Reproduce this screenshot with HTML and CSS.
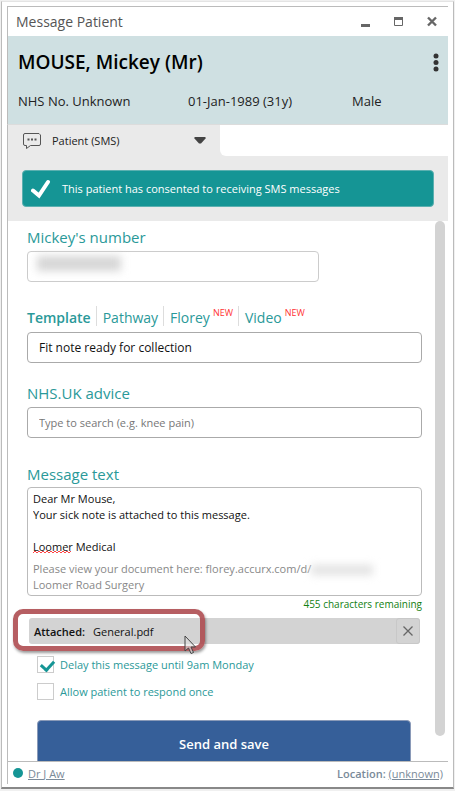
FILE: index.html
```html
<!DOCTYPE html>
<html lang="en">
<head>
  <meta charset="UTF-8">
  <meta name="viewport" content="width=device-width, initial-scale=1.0">
  <title>Message Patient</title>
  <link rel="stylesheet" href="styles.css">
</head>
<body>
  <div class="window">
    <div class="titlebar">
      <span class="titlebar-text">Message Patient</span>
      <button type="button" aria-label="Minimise">
        <svg width="10" height="12"><path d="M0 8h9v3H0z" fill="#666"/></svg>
      </button>
      <button type="button" aria-label="Maximise">
        <svg width="10" height="12"><path d="M.5 1.500h8v8h-8z" fill="none" stroke="#666"/><path d="M0 1h9v3H0z" fill="#666"/></svg>
      </button>
      <button type="button" aria-label="Close">
        <svg width="10" height="12"><path d="M1 1.500l8 8M9 1.500l-8 8" stroke="#666" stroke-width="2.4"/></svg>
      </button>
    </div>

    <header class="patient">
      <div class="patient-top">
        <h1>MOUSE, Mickey (Mr)</h1>
        <button type="button" class="more" aria-label="More options">
          <svg width="6" height="20"><g fill="#333"><circle cx="3" cy="4" r="2.500"/><circle cx="3" cy="10.500" r="2.500"/><circle cx="3" cy="17" r="2.500"/></g></svg>
        </button>
      </div>
      <div class="patient-meta">
        <span>NHS No. Unknown</span>
        <span>01-Jan-1989 (31y)</span>
        <span>Male</span>
      </div>
    </header>

    <div class="tabbar">
      <button type="button" class="tab">
        <svg width="19" height="18" fill="none" stroke="#555"><path d="M2 1.5h14q1.500 1.500 1.500 1.500v9q0 1.500-1.500 1.500H7.500L3.500 16.500V13.500H2q-1.500 0-1.500-1.500V3q0-1.500 1.500-1.500z"/><path d="M4.500 7.500h2M8 7.500h2M11.500 7.500h2" stroke-width="2"/></svg>
        <span>Patient (SMS)</span>
        <svg class="caret" width="12" height="7"><path d="M1 0h10l1 1-5 5.500H5L0 1z" fill="#444"/></svg>
      </button>
      <div class="tab-rest"></div>
    </div>

    <div class="notice">
      <div class="banner">
        <svg width="20" height="20" viewBox="0 0 20 20"><path d="M2 11.500l6 5L17 3" fill="none" stroke="#fff" stroke-width="4" stroke-linecap="round"/></svg>
        <span>This patient has consented to receiving SMS messages</span>
      </div>
    </div>

    <div class="content">
      <form class="form">
        <label class="heading" for="number">Mickey's number</label>
        <div class="field number-field">
          <input type="text" id="number">
          <span class="redacted"></span>
        </div>

        <nav class="sources">
          <a href="#template" class="active">Template</a>
          <a href="#pathway">Pathway</a>
          <a href="#florey">Florey<sup>NEW</sup></a>
          <a href="#video">Video<sup>NEW</sup></a>
        </nav>
        <div class="field">
          <input type="text" id="template" aria-label="Template" value="Fit note ready for collection">
        </div>

        <label class="heading advice-label" for="advice">NHS.UK advice</label>
        <div class="field">
          <input type="text" id="advice" class="search" placeholder="Type to search (e.g. knee pain)">
        </div>

        <label class="heading message-label" for="message">Message text</label>
        <div class="message">
          <textarea id="message" rows="4" spellcheck="false">Dear Mr Mouse,
Your sick note is attached to this message.

Loomer Medical</textarea>
          <svg class="squiggle" width="40" height="4"><path d="M0 3l2-2 2 2 2-2 2 2 2-2 2 2 2-2 2 2 2-2 2 2 2-2 2 2 2-2 2 2 2-2 2 2 2-2 2 2 2-2" fill="none" stroke="#f44"/></svg>
          <p>Please view your document here: florey.accurx.com/d/<span class="redacted-link"></span><br>Loomer Road Surgery</p>
        </div>
        <p class="remaining">455 characters remaining</p>

        <div class="attachment">
          <strong>Attached:</strong>
          <span>General.pdf</span>
          <button type="button" aria-label="Remove attachment">
            <svg width="10" height="10"><path d="M.5.5l9 9M9.500.5l-9 9" stroke="#666" stroke-width="1.300"/></svg>
          </button>
          <div class="highlight"></div>
          <svg class="cursor" width="13" height="20"><path d="M1 1v15l3.500-3 2.500 5.500 2.500-1-2.500-5.500h4.500z" fill="#ddd" fill-opacity=".6" stroke="#444"/></svg>
        </div>

        <label class="check"><input type="checkbox" checked><span>Delay this message until 9am Monday</span></label>
        <label class="check"><input type="checkbox"><span>Allow patient to respond once</span></label>

        <button type="submit" class="send">Send and save</button>
      </form>
      <div class="scrollbar"></div>
    </div>

    <footer class="status">
      <span class="dot"></span>
      <a href="#user">Dr J Aw</a>
      <span class="location"><strong>Location:</strong> <a href="#location">(unknown)</a></span>
    </footer>
  </div>
</body>
</html>
```
FILE: styles.css
```css
* {
  box-sizing: border-box;
}

body {
  margin: 0;
  height: 100vh;
  padding: 1px 1px 2px;
  background: #f0f0f0;
  font-family: "Open Sans", "Noto Sans", sans-serif;
  font-size: 11px;
  color: #222;
}

h1, p {
  margin: 0;
}

button {
  padding: 0;
  border: none;
  background: none;
  font: inherit;
  color: inherit;
}

svg {
  display: block;
  flex: none;
}

input, textarea {
  font: inherit;
  color: #111;
}

.window {
  display: flex;
  flex-direction: column;
  height: 100%;
  padding: 4px 5px 3px;
  background: #fff;
  border: 1px solid #bbb;
  border-top-color: #e4e4e4;
  border-bottom: 2px solid #888;
}

.titlebar,
.patient,
.tabbar,
.notice,
.content,
.status {
  border-left: 1px solid #bbb;
}

.titlebar {
  display: flex;
  align-items: center;
  gap: 23px;
  height: 30px;
  flex: none;
  padding: 0 11px 0 8px;
  border-top: 1px solid #bbb;
  color: #555;
}

.titlebar-text {
  flex: 1;
  font-size: 14px;
}

.patient {
  flex: none;
  height: 89px;
  padding: 13px 9px 0 10px;
  background: #cfe0e2;
  border-bottom: 1px solid #dcdcdc;
}

.patient-top {
  display: flex;
  align-items: center;
  justify-content: space-between;
}

h1 {
  font-size: 19px;
  line-height: 26px;
  font-weight: 600;
  color: #000;
}

.patient-meta {
  display: grid;
  grid-template-columns: 170fr 164fr 87fr;
  margin-top: 17px;
  font-size: 13px;
  line-height: 18px;
}

.tabbar {
  display: flex;
  flex: none;
  height: 31px;
  background: #eaeaea;
}

.tab {
  display: flex;
  align-items: center;
  width: 212px;
  padding: 0 14px 0 15px;
  gap: 10px;
}

.tab .caret {
  margin-left: auto;
}

.tab-rest {
  flex: 1;
  background: #fff;
  border-bottom-left-radius: 6px;
}

.notice {
  flex: none;
  padding: 14px;
  background: #eaeaea;
}

.banner {
  display: flex;
  align-items: center;
  gap: 11px;
  height: 37px;
  padding-left: 8px;
  border: 1px solid #5bb0b0;
  border-radius: 4px;
  background: #159595;
  color: #fff;
}

.content {
  display: flex;
  flex: 1;
  min-height: 0;
  overflow: hidden;
}

.form {
  flex: 1;
  min-width: 0;
  padding: 6px 13px 0 19px;
}

.scrollbar {
  flex: none;
  width: 10px;
  margin: 0 3px 25px 0;
  border-radius: 5px;
  background: #d3d3d3;
}

.heading {
  display: block;
  font-size: 15px;
  line-height: 20px;
  color: #2a9999;
}

.field {
  position: relative;
}

.field input {
  display: block;
  width: 100%;
  height: 31px;
  padding: 0 11px;
  border: 1px solid #aaa;
  border-radius: 4px;
  background: #fff;
  font-size: 12px;
}

.field .search {
  font-size: 11px;
}

.field input::placeholder {
  color: #777;
}

.number-field {
  width: 74%;
  margin-top: 4px;
}

.number-field input {
  border-color: #ccc;
}

.redacted {
  position: absolute;
  left: 10px;
  top: 5px;
  width: 84px;
  height: 15px;
  background: #d6d6d6;
  filter: blur(4px);
}

.sources {
  display: flex;
  margin: 24px 0 6px;
  font-size: 14px;
  line-height: 24px;
}

.sources a {
  height: 20px;
  padding: 0 5px 0 6px;
  border-left: 1px solid #ddd;
  color: #2a9999;
  text-decoration: none;
}

.sources .active {
  padding-left: 0;
  border-left: none;
  font-weight: 600;
}

.sources sup {
  display: inline-block;
  margin-left: 3px;
  font-size: 9px;
  line-height: 8px;
  vertical-align: 7px;
  color: #f33;
}

.advice-label {
  margin: 20px 0 4px;
}

.message-label {
  margin: 26px 0 3px;
}

.message {
  position: relative;
  padding: 3px 5px 2px;
  border: 1px solid #bbb;
  border-radius: 4px;
  line-height: 16px;
  color: #888;
}

.message textarea {
  display: block;
  width: 100%;
  margin-bottom: 6px;
  padding: 0;
  border: none;
  outline: none;
  resize: none;
  overflow: hidden;
  background: none;
}

.squiggle {
  position: absolute;
  left: 5px;
  top: 62px;
}

.redacted-link {
  display: inline-block;
  width: 62px;
  height: 10px;
  vertical-align: middle;
  background: #e2e2e2;
  filter: blur(4px);
}

.remaining {
  font-size: 10px;
  line-height: 16px;
  text-align: right;
  color: #118011;
}

.attachment {
  position: relative;
  display: flex;
  align-items: center;
  gap: 8px;
  height: 26px;
  margin: 6px 2px 12px;
  padding-left: 5px;
  border-radius: 3px;
  background: #d3d3d3;
  color: #111;
}

.attachment button {
  display: flex;
  align-items: center;
  justify-content: center;
  width: 24px;
  height: 26px;
  margin-left: auto;
  border: 1px solid #c8c8c8;
  border-radius: 3px;
}

.attachment strong {
  font-weight: 600;
}

.highlight {
  position: absolute;
  left: -16px;
  top: -9px;
  width: 192px;
  height: 42px;
  border: 5px solid rgba(172, 72, 76, 0.88);
  border-radius: 10px;
  box-shadow: 1px 2px 3px rgba(0, 0, 0, 0.4);
}

.cursor {
  position: absolute;
  left: 155px;
  top: 17px;
}

.check {
  display: flex;
  align-items: center;
  gap: 6px;
  height: 17px;
  margin: 0 0 10px 10px;
  color: #2a9999;
}

.check input {
  appearance: none;
  position: relative;
  width: 17px;
  height: 17px;
  margin: 0;
  border: 1px solid #ccc;
  background: #fff;
}

.check input:checked::after {
  content: "";
  position: absolute;
  left: 5px;
  top: 1px;
  width: 6px;
  height: 10px;
  border: solid #159595;
  border-width: 0 3px 3px 0;
  transform: rotate(42deg);
}

.send {
  display: block;
  width: calc(100% - 21px);
  height: 48px;
  margin: 20px 0 0 10px;
  border: 1px solid #8a9ab8;
  border-radius: 4px;
  background: #365f99;
  color: #fff;
  font-size: 13px;
  font-weight: 600;
}

.status {
  display: flex;
  align-items: center;
  flex: none;
  height: 23px;
  padding: 0 5px;
  border-top: 1px solid #bbb;
  color: #7a8a99;
}

.status a {
  color: #7a8a99;
}

.status strong {
  font-weight: 600;
}

.dot {
  width: 10px;
  height: 10px;
  margin-right: 5px;
  border-radius: 50%;
  background: #159595;
}

.location {
  margin-left: auto;
}
```
